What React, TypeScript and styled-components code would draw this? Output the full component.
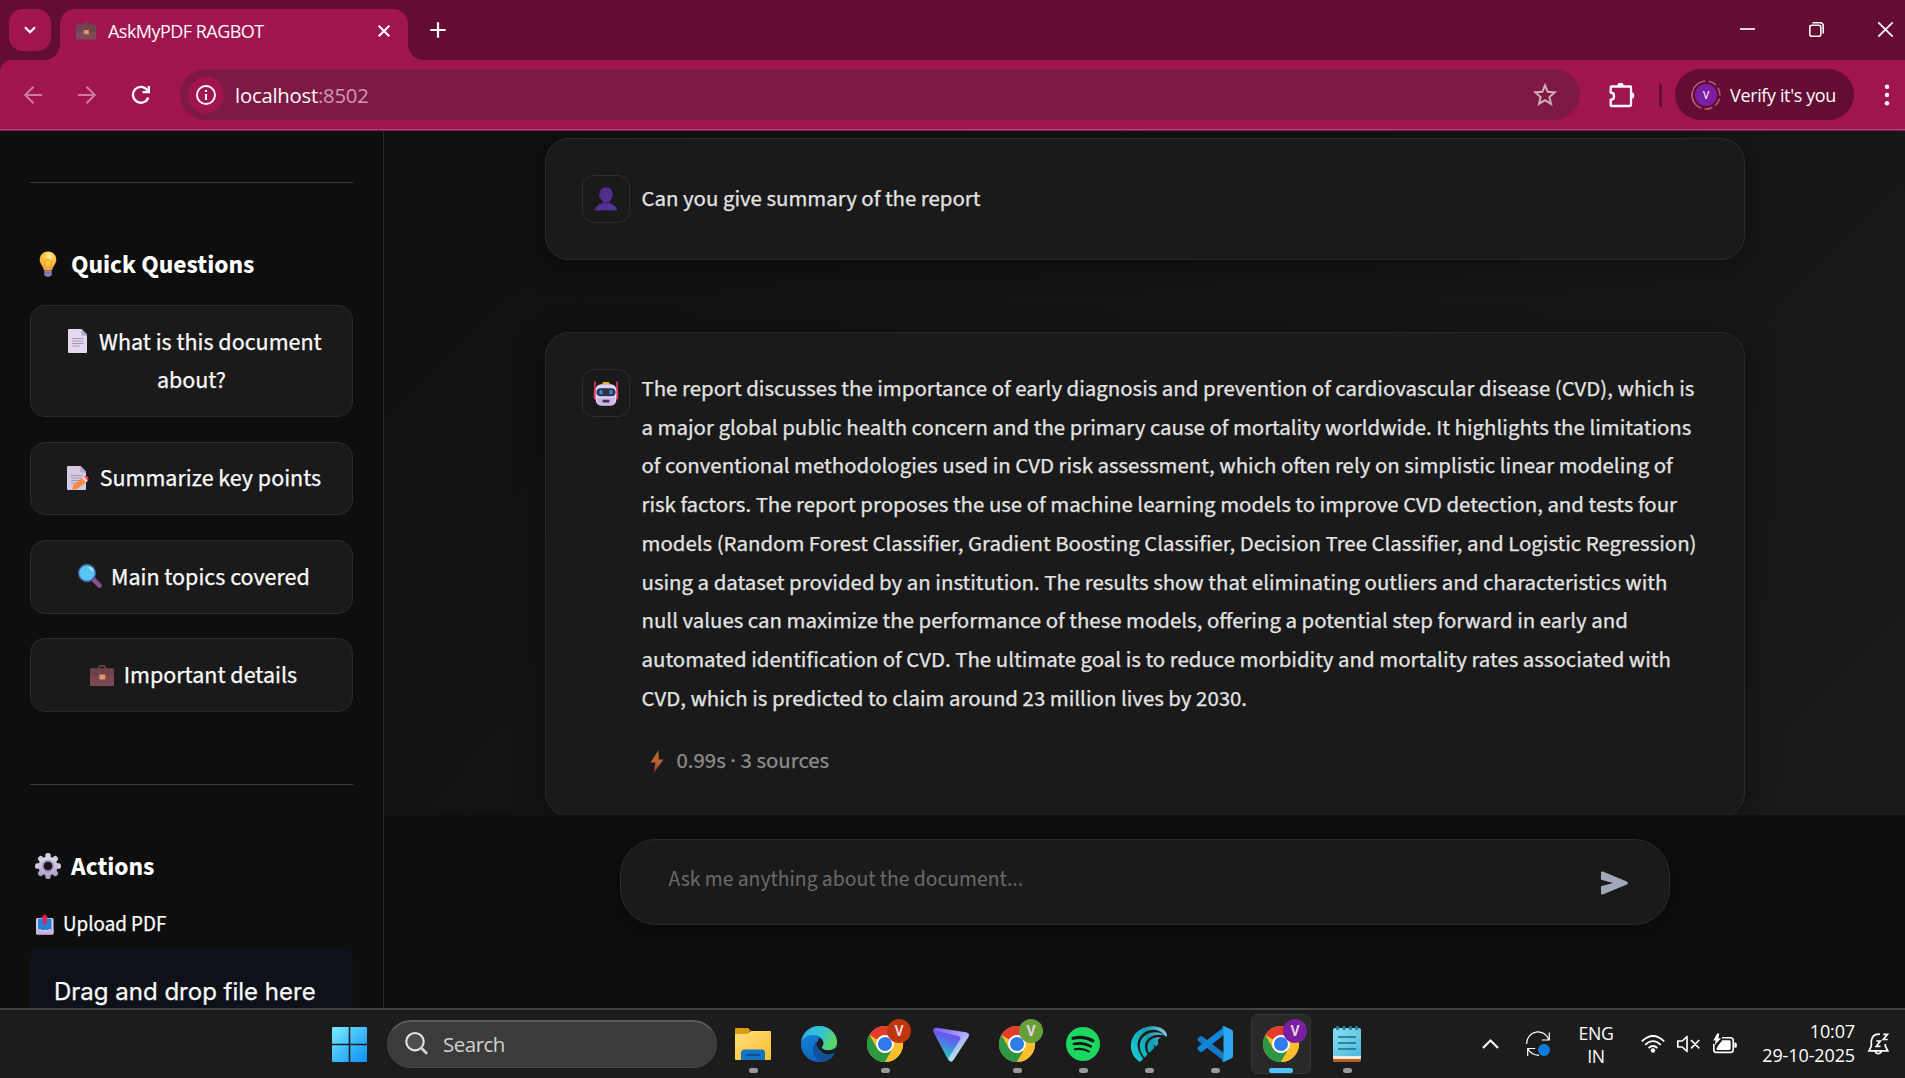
import React from "react";
import styled, { createGlobalStyle } from "styled-components";

const SOURCE = '"Source Sans 3", "Source Sans Pro", "Noto Sans CJK SC", sans-serif';
const SEGOE = '"Segoe UI", "Open Sans", "Noto Sans", sans-serif';

const GlobalStyle = createGlobalStyle`
  * { box-sizing: border-box; }
  html, body { margin: 0; padding: 0; background: #0e0e0e; overflow: hidden; }
  svg { display: block; flex: none; overflow: visible; }
  button { margin: 0; padding: 0; border: 0; background: none; color: inherit; font: inherit; }
`;

const Screen = styled.div`
  display: flex;
  flex-direction: column;
  width: 1905px;
  height: 1078px;
  overflow: hidden;
  font-family: ${SOURCE};
  color: #fafafa;
`;

/* ---------- Browser chrome ---------- */

const TabStrip = styled.div`
  display: flex;
  height: 60px;
  background: #640d33;
  padding: 9px 12px 0 9px;
  font-family: ${SEGOE};
`;

const TabSearch = styled.button`
  display: grid;
  place-items: center;
  width: 42px;
  height: 42px;
  border-radius: 14px;
  background: #a1154f;
`;

const Tab = styled.div`
  position: relative;
  display: flex;
  align-items: center;
  width: 348px;
  height: 51px;
  margin-left: 9px;
  padding: 0 18px 7px 16px;
  border-radius: 15px 15px 0 0;
  background: #a1154f;
  &::before,
  &::after {
    content: "";
    position: absolute;
    bottom: 0;
    width: 15px;
    height: 15px;
  }
  &::before {
    left: -15px;
    background: radial-gradient(circle at 0 0, transparent 14.5px, #a1154f 15px);
  }
  &::after {
    right: -15px;
    background: radial-gradient(circle at 100% 0, transparent 14.5px, #a1154f 15px);
  }
`;

const TabTitle = styled.span`
  flex: 1;
  margin-left: 12px;
  font-size: 18px;
  letter-spacing: -0.53px;
  line-height: 26px;
  white-space: nowrap;
`;

const NewTab = styled.button`
  align-self: flex-start;
  margin: 13px 0 0 22px;
`;

const WindowControls = styled.div`
  display: flex;
  gap: 54px;
  margin: 13px 0 0 auto;
  height: 15px;
`;

const Toolbar = styled.div`
  display: flex;
  align-items: center;
  height: 71px;
  padding: 0 15px 1px 24px;
  background: #a1154f;
  border-bottom: 1px solid #76204a;
  box-shadow: inset 0 -1px 0 #b04873;
  font-family: ${SEGOE};
`;

const ToolbarWrap = styled.div`
  background: #640d33;
  & > div { border-top-left-radius: 12px; }
`;

const NavButtons = styled.div`
  display: flex;
  gap: 36px;
  margin-right: 30px;
`;

const AddressBar = styled.div`
  display: flex;
  align-items: center;
  width: 1401px;
  height: 51px;
  padding: 0 23px 0 8px;
  border-radius: 26px;
  background: #7d1943;
`;

const SiteInfo = styled.span`
  display: grid;
  place-items: center;
  width: 36px;
  height: 36px;
  border-radius: 50%;
  background: #a1154f;
`;

const Url = styled.span`
  flex: 1;
  margin-left: 11px;
  font-size: 20.3px;
  letter-spacing: -0.22px;
  line-height: 28px;
  span { color: #d09ab2; }
`;

const ToolbarDivider = styled.i`
  width: 3px;
  height: 24px;
  margin: 0 13px 0 24px;
  border-radius: 2px;
  background: #640d33;
`;

const ProfilePill = styled.div`
  display: flex;
  align-items: center;
  width: 179px;
  height: 51px;
  padding-left: 16px;
  border-radius: 26px;
  background: #640d33;
  font-size: 18px;
  letter-spacing: -0.38px;
  white-space: nowrap;
`;

const ProfileLabel = styled.span`
  margin-left: 9px;
  line-height: 26px;
`;

/* ---------- App ---------- */

const Page = styled.div`
  display: flex;
  height: 877px;
  overflow: hidden;
  -webkit-text-stroke: 0.25px currentColor;
`;

const Sidebar = styled.aside`
  width: 384px;
  padding: 51px 30px 0;
  background: #0e0e0e;
  border-right: 1px solid #2a2a2a;
  overflow: hidden;
`;

const Rule = styled.hr`
  height: 1px;
  margin: 0;
  border: 0;
  background: #3c3c3c;
`;

const SectionTitle = styled.h3<{ $top: number; $bottom: number }>`
  display: flex;
  align-items: center;
  gap: 10px;
  height: 36px;
  margin: ${(p) => p.$top}px 0 ${(p) => p.$bottom}px 5px;
  font-size: 25.6px;
  font-weight: 700;
  line-height: 36px;
  color: #ffffff;
  -webkit-text-stroke: 0;
  span { padding-top: 2px; }
`;

const QuestionList = styled.div`
  display: flex;
  flex-direction: column;
  gap: 24.6px;
  margin-bottom: 71.8px;
`;

const QuestionButton = styled.button`
  width: 323px;
  padding: 17.6px 20px 16px;
  border: 1px solid #2a2a2a;
  border-radius: 15px;
  background: #1a1a1a;
  font-size: 24px;
  font-weight: 400;
  line-height: 38.2px;
  text-align: center;
`;

const Emoji = styled.span`
  display: inline-flex;
  align-items: flex-end;
  justify-content: center;
  width: 33px;
  height: 24px;
  vertical-align: -3.5px;
`;

const UploadLabel = styled.div`
  display: flex;
  align-items: center;
  gap: 9.5px;
  height: 30px;
  margin-left: 5.5px;
  font-size: 21px;
  line-height: 30px;
`;

const DropZone = styled.div`
  height: 120px;
  margin-top: 7.5px;
  padding: 25.7px 24px;
  border-radius: 12px;
  background: #0e1117;
  font-family: Inter, "Liberation Sans", sans-serif;
  font-size: 24px;
  line-height: 38px;
  white-space: nowrap;
`;

const Main = styled.main`
  display: flex;
  flex-direction: column;
  flex: 1;
  background: linear-gradient(135deg, #0f0f0f 0%, #1a1a1a 92%);
`;

const Conversation = styled.section`
  display: flex;
  flex-direction: column;
  align-items: flex-start;
  gap: 72px;
  height: 684px;
  padding: 7px 0 0 161px;
  overflow: hidden;
`;

const MessageCard = styled.article<{ $height: number }>`
  display: flex;
  flex: none;
  gap: 11.5px;
  width: 1200px;
  height: ${(p) => p.$height}px;
  padding: 36px;
  border: 1px solid #2a2a2a;
  border-radius: 24px;
  background: #1a1a1a;
  box-shadow: 0 6px 30px rgba(0, 0, 0, 0.4);
`;

const Avatar = styled.div`
  display: grid;
  place-items: center;
  flex: none;
  width: 48px;
  height: 48px;
  border: 1px solid #2d2d33;
  border-radius: 12px;
`;

const MessageBody = styled.div<{ $shift: number }>`
  margin-top: ${(p) => p.$shift}px;
  color: #e3e3e3;
  font-size: 22.8px;
  line-height: 38.76px;
  white-space: nowrap;
`;

const Meta = styled.div`
  display: flex;
  align-items: center;
  gap: 13px;
  margin-top: 23px;
  padding-left: 8px;
  color: #8c8c8c;
`;

const Composer = styled.footer`
  display: flex;
  align-items: flex-start;
  height: 193px;
  padding: 24px 0 0 236px;
  background: #0e0e0e;
`;

const PromptBox = styled.div`
  display: flex;
  align-items: center;
  justify-content: space-between;
  width: 1050px;
  height: 86px;
  padding: 1px 41px 0 47.5px;
  border: 1px solid #2a2a2a;
  border-radius: 36px;
  background: #1a1a1a;
  box-shadow: 0 6px 24px rgba(0, 0, 0, 0.4);
`;

const Placeholder = styled.span`
  padding-bottom: 5px;
  color: #6a6a6a;
  font-size: 21.6px;
  line-height: 36px;
  -webkit-text-stroke: 0;
`;

/* ---------- Taskbar ---------- */

const Taskbar = styled.div`
  display: flex;
  align-items: center;
  height: 70px;
  padding: 0 16px 0 332px;
  border-top: 2px solid #424242;
  background: #1c1c1c;
  font-family: ${SEGOE};
`;

const SearchPill = styled.div`
  display: flex;
  align-items: center;
  width: 330px;
  height: 48px;
  margin: 0 6px 0 20px;
  padding: 0 0 2px 17px;
  border: 1px solid #484848;
  border-top: 2px solid #5c5c5c;
  border-radius: 24px;
  background: #3b3b3b;
  color: #d2d2d2;
  font-size: 20.5px;
  letter-spacing: -0.5px;
`;

const SearchLabel = styled.span`
  margin-left: 15px;
  line-height: 28px;
`;

const Apps = styled.div`
  display: flex;
  gap: 6px;
`;

const AppTile = styled.div<{ $active?: boolean }>`
  position: relative;
  display: grid;
  place-items: center;
  width: 60px;
  height: 60px;
  border: 1px solid ${(p) => (p.$active ? "#363636" : "transparent")};
  border-radius: 7px;
  background: ${(p) => (p.$active ? "#292929" : "transparent")};
`;

const Indicator = styled.i<{ $active?: boolean }>`
  position: absolute;
  bottom: 0;
  left: calc(50% - ${(p) => (p.$active ? 12 : 4.5)}px);
  width: ${(p) => (p.$active ? 24 : 9)}px;
  height: 5px;
  border-radius: 3px;
  background: ${(p) => (p.$active ? "#4cc2ff" : "#9a9a9a")};
`;

const Badge = styled.b<{ $color: string }>`
  position: absolute;
  top: 4px;
  right: 3px;
  width: 24px;
  height: 24px;
  border-radius: 50%;
  background: ${(p) => p.$color};
  color: #ead9e2;
  font: 600 14px/24px Roboto, "Open Sans", sans-serif;
  text-align: center;
`;

const Tray = styled.div`
  display: flex;
  align-items: center;
  margin-left: auto;
  color: #ffffff;
  font-size: 17.5px;
`;

const Language = styled.div`
  width: 40px;
  margin: 2px 25px 0 26px;
  font-size: 17.7px;
  line-height: 23.5px;
  text-align: center;
  letter-spacing: -0.3px;
`;

const StatusIcons = styled.div`
  display: flex;
  align-items: center;
  gap: 12px;
`;

const Clock = styled.div`
  width: 118px;
  margin: -2px 13px 0 0;
  font-size: 18px;
  line-height: 24px;
  text-align: right;
  letter-spacing: -0.12px;
  white-space: nowrap;
`;

/* ---------- Pictograms ---------- */

const Briefcase = ({ w = 24, dim = false }: { w?: number; dim?: boolean }) => (
  <svg width={w} height={(w * 21) / 24} viewBox="0 0 24 21">
    <path d="M9 4V2.5Q9 .8 10.7.8h2.6Q15 .8 15 2.5V4" fill="none" stroke={dim ? "#6b4a50" : "#7a4650"} strokeWidth="1.4" />
    <rect y="3.4" width="24" height="17.6" rx="1" fill={dim ? "#7c4b55" : "#7b4852"} />
    <rect y="3.4" width="24" height="8.2" rx="1" fill={dim ? "#6c4650" : "#6e424c"} />
    <rect x="9.3" y="9.6" width="6" height="5" rx="1" fill="#e5936b" />
  </svg>
);

const Bulb = () => (
  <svg width="26" height="26" viewBox="0 0 26 26">
    <defs>
      <radialGradient id="bulb" cx=".6" cy=".25" r=".8">
        <stop offset="0" stopColor="#fff1a8" />
        <stop offset=".35" stopColor="#fcc94a" />
        <stop offset="1" stopColor="#f0a32e" />
      </radialGradient>
    </defs>
    <path d="M13 .5c5 0 8.3 3.5 8.3 8 0 4.200-3.200 5.900-4.300 11H9C7.900 14.400 4.700 12.700 4.700 8.500 4.700 4 8 .5 13 .5z" fill="url(#bulb)" />
    <path d="M10.500 19l-1.300-8c1.300-3 6.300-3 7.600 0l-1.300 8" fill="none" stroke="#e99a2b" strokeWidth=".9" />
    <path d="M9.300 19.500h7.400v3.700q0 2.300-3.700 2.300t-3.700-2.300z" fill="#a08bb5" />
    <path d="M9.300 21.300h7.400M9.600 23.300h6.800" stroke="#6f5b86" strokeWidth=".8" />
  </svg>
);

const Sheet = ({ pencil = false }: { pencil?: boolean }) => (
  <svg width={pencil ? 22 : 19} height="24" viewBox={pencil ? "0 0 22 24" : "0 0 19 24"}>
    <path d="M1 0h12.500L19 5.500V23q0 1-1 1H1q-1 0-1-1V1Q0 0 1 0z" fill={pencil ? "#d5cbe0" : "#e4daf0"} />
    <path d="M13.500 0L19 5.500V7l-5.500-.8z" fill="#b6a6c8" />
    <path d="M4 9.500h11.500M4 12h11.500M4 14.500h11.500M4 17h7.500" stroke="#a594b6" strokeWidth="1" />
    {pencil && (
      <g>
        <path d="M5 23.500l1.300-4.500L16.500 11l3.800 4.300L10 23z" fill="#f98a45" />
        <path d="M15 12.200l2-1.700 4 4.300-2 1.800z" fill="#efd5d8" />
        <path d="M17 10.500q2-1.500 3.800.5 1.500 2 .2 3.800z" fill="#f2405f" />
      </g>
    )}
  </svg>
);

const Magnifier = () => (
  <svg width="24" height="24" viewBox="0 0 24 24">
    <path d="M15 15l6.500 6.500" stroke="#8d4d97" strokeWidth="4.600" strokeLinecap="round" />
    <circle cx="9" cy="9" r="8.500" fill="#58c4f0" stroke="#44589e" strokeWidth="1.400" />
    <path d="M11.500 3.500q2.500 1 3.200 3.200" stroke="#bdf0ff" strokeWidth="1.500" fill="none" strokeLinecap="round" />
  </svg>
);

const Gear = () => (
  <svg width="26" height="26" viewBox="-13 -13 26 26">
    <defs>
      <linearGradient id="gear" x1="0" y1="0" x2="0" y2="1">
        <stop offset="0" stopColor="#e0d9ea" />
        <stop offset="1" stopColor="#b3a1cb" />
      </linearGradient>
    </defs>
    <g fill="url(#gear)">
      {[0, 45, 90, 135, 180, 225, 270, 315].map((a) => (
        <rect key={a} x="-2.700" y="-13" width="5.400" height="7" rx="2.200" transform={`rotate(${a})`} fill={a > 90 && a < 270 ? "#b3a1cb" : "#d3cade"} />
      ))}
      <circle r="9.600" />
    </g>
    <circle r="5.700" fill="#93829f" />
    <circle r="4.100" fill="#17141a" />
  </svg>
);

const Outbox = () => (
  <svg width="18" height="21" viewBox="0 0 18 21">
    <rect y="4" width="17.500" height="16.500" rx="1.500" fill="#dccdee" />
    <path d="M2 4.800h13.500V16H2z" fill="#2380d8" />
    <path d="M0 15h5l1.500 2.300h4.600L12.500 15h5v4.300q0 1.200-1.200 1.200H1.200Q0 20.500 0 19.300z" fill="#cbb3e0" />
    <path d="M8.700 0l4.200 4.500h-2.300v5.800H6.900V4.500H4.600z" fill="#d6244f" />
  </svg>
);

const Person = () => (
  <svg width="24" height="24" viewBox="0 0 24 24">
    <defs>
      <linearGradient id="person" x1="0" y1="0" x2="1" y2="1">
        <stop offset="0" stopColor="#4c2c85" />
        <stop offset="1" stopColor="#56339a" />
      </linearGradient>
    </defs>
    <path d="M5.800 6Q5.800.5 12 .5T18.200 6v3.500q-.7 3.500-3 4.800v2q7.300 1.700 8 7.200H.8q.7-5.500 8-7.200v-2q-2.300-1.300-3-4.800z" fill="url(#person)" />
    <path d="M5.200 7q-.6 1.500.3 3.200l1 .3V6.500zM18.800 7q.6 1.500-.3 3.200l-1 .3V6.500z" fill="#4c2c85" />
    <path d="M8.800 14.300q3.200 1.700 6.400 0v1.500q-3 2-6.400 0z" fill="#3f2571" />
  </svg>
);

const Robot = () => (
  <svg width="26" height="25" viewBox="0 0 26 25">
    <path d="M2 1v8M24 1v8" stroke="#d73b62" strokeWidth="1.700" strokeLinecap="round" />
    <rect x=".8" y="8.500" width="3.500" height="10" rx="1.500" fill="#e63c67" />
    <rect x="21.700" y="8.500" width="3.500" height="10" rx="1.500" fill="#e63c67" />
    <path d="M9 3.500Q9 1 11 1h4q2 0 2 2.500z" fill="#f2ab2b" />
    <rect x="2.700" y="3.200" width="20.600" height="21.300" rx="5.500" fill="#e2d5f1" />
    <path d="M4 17h18v2.500q-.5 5-5.500 5h-7q-5 0-5.500-5z" fill="#cdb7e6" />
    <rect x="3.500" y="7.200" width="19" height="8" rx="4" fill="#33304e" />
    <ellipse cx="8" cy="11.200" rx="1.700" ry="2.400" fill="#2b8fe0" />
    <ellipse cx="18" cy="11.200" rx="1.700" ry="2.400" fill="#2b8fe0" />
    <rect x="9.500" y="18.800" width="7" height="2.600" rx="1" fill="#3c3152" />
  </svg>
);

const Bolt = () => (
  <svg width="14" height="23" viewBox="0 0 14 23">
    <defs>
      <linearGradient id="bolt" x1="0" y1="0" x2="0" y2="1">
        <stop offset="0" stopColor="#a5702e" />
        <stop offset=".5" stopColor="#b86433" />
        <stop offset="1" stopColor="#95323c" />
      </linearGradient>
    </defs>
    <path d="M8.600 0L.5 12.500h4.800L4 22.800 13.500 9.500H8.700z" fill="url(#bolt)" />
  </svg>
);

const SendIcon = () => (
  <svg width="27" height="24" viewBox="0 0 27 24">
    <path d="M0 1.800Q0 0 1.900.6l23.900 9.800q2.200 1.600 0 3.200L1.900 23.400Q0 24 0 22.200V16q0-.8.8-1L12 12 .8 9Q0 8.800 0 8z" fill="#a3a8b8" />
  </svg>
);

/* ---------- Taskbar app logos ---------- */

const WindowsLogo = () => (
  <svg width="35" height="35" viewBox="0 0 35 35">
    <defs>
      <linearGradient id="win" gradientUnits="userSpaceOnUse" x1="0" y1="0" x2="35" y2="35">
        <stop offset="0" stopColor="#7bedff" />
        <stop offset=".5" stopColor="#3fbcfb" />
        <stop offset="1" stopColor="#0a90f5" />
      </linearGradient>
    </defs>
    <path d="M1 0h15.700v16.700H0V1zM18.300 0H34q1 0 1 1v15.700H18.300zM0 18.300h16.700V35H1q-1 0-1-1zM18.300 18.300H35V34q0 1-1 1H18.300z" fill="url(#win)" />
  </svg>
);

const Explorer = () => (
  <svg width="36" height="34" viewBox="0 0 36 34">
    <defs>
      <linearGradient id="fold" x1="0" y1="0" x2="1" y2="1">
        <stop offset="0" stopColor="#ffe07c" />
        <stop offset="1" stopColor="#fbbe31" />
      </linearGradient>
    </defs>
    <path d="M0 2q0-1 1-1h12l3 3h-1l-3 4H0z" fill="#dc9c12" />
    <path d="M0 7h12l4-3h19q1 0 1 1v27q0 1-1 1H1q-1 0-1-1z" fill="url(#fold)" />
    <path d="M6 33v-7q0-3.500 3.500-3.500h17Q30 22.500 30 26v7z" fill="#1474c4" />
    <path d="M11 28h14" stroke="#0a4882" strokeWidth="1.600" />
  </svg>
);

const Edge = () => (
  <svg width="36" height="36" viewBox="0 0 36 36">
    <defs>
      <linearGradient id="edgeTop" x1="0" y1=".3" x2="1" y2=".7">
        <stop offset="0" stopColor="#2fb0e6" />
        <stop offset=".5" stopColor="#35c5d0" />
        <stop offset="1" stopColor="#63d84f" />
      </linearGradient>
      <linearGradient id="edgeMid" x1="0" y1="0" x2=".4" y2="1">
        <stop offset="0" stopColor="#148ad9" />
        <stop offset="1" stopColor="#1064c0" />
      </linearGradient>
    </defs>
    <circle cx="18" cy="18" r="18" fill="url(#edgeMid)" />
    <path d="M18 12q5 1 4 7-2 3 2 5.200 6 1.500 12.500-3V30l-3-3q-6 3-12 0-5-4-6-9z" fill="#1c1c1c" />
    <path d="M13.800 17.500C9 25 14 35.500 22.500 35.500c5 0 10-4.500 11.300-8.500-7 3.500-14 2.300-16.500-3-1.800-3.800-1-8 1.300-10-2 .2-3.800 1.700-4.800 3.500z" fill="#114f98" />
    <path d="M0 17C1 7 9 0 18 0c10.500 0 18 7.500 18 15.800 0 5.500-4 8.200-8.500 8.200-4.200 0-6.700-1.300-6.700-2.700 0-.8 1.700-1.600 1.700-4.800C22.500 12 18 9 12 9 6 9 1 12.500 0 17z" fill="url(#edgeTop)" />
    <path d="M15.500 17q2-3.500 6.500-2 1.200 3.800-1.500 6.200 1 3.500 7.500 3.300-5 2.300-9-.5-3.800-3-3.500-7z" fill="#1c1c1c" />
  </svg>
);

const Chrome = () => (
  <svg width="36" height="36" viewBox="-18 -18 36 36">
    <circle r="18" fill="#fbbf2c" />
    <path d="M-15.590-9A18 18 0 0 1 15.590-9H0A9 9 0 0 0-7.790-4.500z" fill="#e33b2e" />
    <path d="M-15.590-9A18 18 0 0 0 0 18L7.790 4.500A9 9 0 0 1-7.790 4.500z" fill="#2c9745" />
    <path d="M15.590-9A18 18 0 0 1 0 18L7.790 4.500A9 9 0 0 0 0-9z" fill="#fbbf2c" />
    <circle r="9" fill="#fff" />
    <circle r="7" fill="#2f7bea" />
  </svg>
);

const ProtonVpn = () => (
  <svg width="36" height="35" viewBox="0 0 36 35">
    <defs>
      <linearGradient id="pv1" x1="0" y1="0" x2=".8" y2="1">
        <stop offset="0" stopColor="#7a52f4" />
        <stop offset=".45" stopColor="#a99bf8" />
        <stop offset="1" stopColor="#b5ffec" />
      </linearGradient>
      <linearGradient id="pv2" x1=".8" y1="0" x2=".5" y2="1">
        <stop offset="0" stopColor="#7340f2" />
        <stop offset=".5" stopColor="#4f7ae3" />
        <stop offset="1" stopColor="#21d4bd" />
      </linearGradient>
    </defs>
    <path d="M.3 4.500Q0 .3 4 .8l29 4.500q4.500 1 2.300 5L20.500 33q-2.500 3.300-5 0z" fill="url(#pv1)" />
    <path d="M.5 4.500Q1 2.500 5 4.200L25.500 9q3 1.200 1.300 4L16.500 29.500l-1.300 3z" fill="url(#pv2)" />
  </svg>
);

const Spotify = () => (
  <svg width="34" height="34" viewBox="0 0 34 34">
    <circle cx="17" cy="17" r="17" fill="#1ed760" />
    <g fill="none" stroke="#161616" strokeLinecap="round">
      <path d="M7 11.300q10.500-2.800 20 2.500" strokeWidth="3.200" />
      <path d="M8 17q9-2.200 16.800 2.300" strokeWidth="2.700" />
      <path d="M8.800 22.300q7.500-1.700 14 2.100" strokeWidth="2.200" />
    </g>
  </svg>
);

const Wave = () => (
  <svg width="36" height="36" viewBox="0 0 36 36">
    <defs>
      <linearGradient id="wave" gradientUnits="userSpaceOnUse" x1="0" y1="20" x2="34" y2="3">
        <stop offset="0" stopColor="#16c7cd" />
        <stop offset=".55" stopColor="#159bb0" />
        <stop offset="1" stopColor="#86c8ea" />
      </linearGradient>
    </defs>
    <g fill="url(#wave)">
      <path d="M9 36C-3.500 28-2.500 11 8.500 4 18-2 31-.5 35 6.500q1.500 1.800.8 3.700-1.300.8-2.500-1C28 3 20 2.300 13.500 6.500 5 12 4 22.500 12.300 32.700z" />
      <path d="M13.500 31.500C6.500 23 7.500 12.800 15.500 8.500c6-3.200 13.500-3 17.300.8-5-1.300-10.800-.6-15 3-5 4.500-4.600 10.200-1.300 16.300z" />
      <path d="M18 27c-3.300-7-1-12.500 4-14.700q4.500-1.600 8.200-.8-5 1.500-2.700 6.300L24.700 20.700q-2-1.300-2.300-2.700.2 2 1 3.800z" />
    </g>
  </svg>
);

const VsCode = () => (
  <svg width="36" height="36" viewBox="0 0 36 36">
    <path d="M.8 12.500L3 10.300q1-.8 2.200 0L28 28v7.800L1 15q-1.200-1.300-.2-2.500z" fill="#1379c4" />
    <path d="M.8 23.500L3 25.700q1 .8 2.200 0L28 8V.2L1 21q-1.200 1.300-.2 2.500z" fill="#0f86d8" />
    <path d="M26.500 0l8.300 3.800q1.200.6 1.200 2v24.400q0 1.400-1.200 2L26.500 36l-1.700-1.300q1.700.3 1.700-1.700V3q0-2-1.700-1.700z" fill="#2ca5f2" />
  </svg>
);

const Notepad = () => (
  <svg width="28" height="36" viewBox="0 0 28 36">
    <defs>
      <linearGradient id="note" x1="0" y1="0" x2="1" y2="1">
        <stop offset="0" stopColor="#8adff0" />
        <stop offset="1" stopColor="#4fb9dc" />
      </linearGradient>
    </defs>
    <path d="M0 30h28v4.500q0 1.500-1.500 1.500h-25Q0 36 0 34.500z" fill="#b4611c" />
    <path d="M0 27h28v4.500q0 1.500-1.500 1.500h-25Q0 33 0 31.500z" fill="#f1e9e4" />
    <path d="M0 4q0-2 2-2h24q2 0 2 2v26H0z" fill="url(#note)" />
    <path d="M5 11h18M5 17h18M5 23h18" stroke="#12718f" strokeWidth="1.700" />
    <path d="M4.500 0v4M11 0v4M17.500 0v4M23.500 0v4" stroke="#1c7d9c" strokeWidth="2.600" />
  </svg>
);

type AppEntry = { id: string; icon: React.ReactNode; running?: boolean; active?: boolean; badge?: string };

const APPS: AppEntry[] = [
  { id: "explorer", icon: <Explorer />, running: true },
  { id: "edge", icon: <Edge /> },
  { id: "chrome-red", icon: <Chrome />, running: true, badge: "#bf360c" },
  { id: "vpn", icon: <ProtonVpn /> },
  { id: "chrome-green", icon: <Chrome />, running: true, badge: "#689f38" },
  { id: "spotify", icon: <Spotify />, running: true },
  { id: "wave", icon: <Wave />, running: true },
  { id: "vscode", icon: <VsCode />, running: true },
  { id: "chrome-purple", icon: <Chrome />, running: true, active: true, badge: "#7b1fa2" },
  { id: "notepad", icon: <Notepad />, running: true },
];

const ANSWER = [
  "The report discusses the importance of early diagnosis and prevention of cardiovascular disease (CVD), which is",
  "a major global public health concern and the primary cause of mortality worldwide. It highlights the limitations",
  "of conventional methodologies used in CVD risk assessment, which often rely on simplistic linear modeling of",
  "risk factors. The report proposes the use of machine learning models to improve CVD detection, and tests four",
  "models (Random Forest Classifier, Gradient Boosting Classifier, Decision Tree Classifier, and Logistic Regression)",
  "using a dataset provided by an institution. The results show that eliminating outliers and characteristics with",
  "null values can maximize the performance of these models, offering a potential step forward in early and",
  "automated identification of CVD. The ultimate goal is to reduce morbidity and mortality rates associated with",
  "CVD, which is predicted to claim around 23 million lives by 2030.",
];

const line = { fill: "none", stroke: "currentColor" } as const;

function BrowserChrome() {
  return (
    <>
      <TabStrip>
        <TabSearch aria-label="Search tabs">
          <svg width="12" height="8" viewBox="0 0 12 8"><path d="M1 1.200l5 5 5-5" {...line} strokeWidth="2.300" /></svg>
        </TabSearch>
        <Tab>
          <Briefcase w={20} dim />
          <TabTitle>AskMyPDF RAGBOT</TabTitle>
          <svg width="12" height="12" viewBox="0 0 12 12"><path d="M.7.7l10.600 10.600M11.300.7L.7 11.300" {...line} strokeWidth="2.200" /></svg>
        </Tab>
        <NewTab aria-label="New tab">
          <svg width="16" height="16" viewBox="0 0 16 16"><path d="M8 .3v15.400M.3 8h15.400" {...line} strokeWidth="2.200" /></svg>
        </NewTab>
        <WindowControls>
          <svg width="15" height="15" viewBox="0 0 15 15"><path d="M0 7h15" {...line} strokeWidth="1.700" /></svg>
          <svg width="15" height="15" viewBox="0 0 15 15">
            <rect x=".8" y="3.300" width="11" height="11" rx="2" {...line} strokeWidth="1.600" />
            <path d="M3.500.8H11q3.200 0 3.200 3.200v7.500" {...line} strokeWidth="1.600" />
          </svg>
          <svg width="15" height="15" viewBox="0 0 15 15"><path d="M.3.3l14.400 14.400M14.700.3L.3 14.700" {...line} strokeWidth="1.700" /></svg>
        </WindowControls>
      </TabStrip>
      <ToolbarWrap>
        <Toolbar>
          <NavButtons>
            <svg width="18" height="18" viewBox="0 0 18 18"><path d="M18 9H1.500M9.500.7L1.200 9l8.300 8.300" {...line} stroke="#cf7a9e" strokeWidth="2" /></svg>
            <svg width="18" height="18" viewBox="0 0 18 18"><path d="M0 9h16.500M8.500.7L16.800 9l-8.300 8.300" {...line} stroke="#cf7a9e" strokeWidth="2" /></svg>
            <svg width="18" height="18" viewBox="0 0 18 18">
              <path d="M16.300 11.500A7.900 7.900 0 1 1 15.500 4.500" {...line} strokeWidth="2.300" />
              <path d="M18 0v7.300h-7.500V5h5.200V0z" fill="currentColor" />
            </svg>
          </NavButtons>
          <AddressBar>
            <SiteInfo>
              <svg width="20" height="20" viewBox="0 0 20 20">
                <circle cx="10" cy="10" r="9" {...line} strokeWidth="1.900" />
                <path d="M10 9v6M10 5v2.100" {...line} strokeWidth="2.100" />
              </svg>
            </SiteInfo>
            <Url>localhost<span>:8502</span></Url>
            <svg width="24" height="23" viewBox="0 0 24 23">
              <path d="M12 2.300l2.700 6.500 7 .6-5.300 4.600 1.600 6.800-6-3.600-6 3.600L7.600 14 2.300 9.400l7-.6z" {...line} stroke="#d0afbd" strokeWidth="2" />
            </svg>
          </AddressBar>
          <svg width="26" height="26" viewBox="0 0 26 26" style={{ marginLeft: 29 }}>
            <path d="M2.500 4.500h19q.5 0 .5.500v18q0 1-1 1H2.500q-.8 0-.8-.8v-5.400c4.500-.3 4.500-7 0-7.300V5.300q0-.8.8-.8z" {...line} strokeWidth="2.300" />
            <path d="M8.300 4a3.200 3.200 0 0 1 6.400 0zM22 10.200a3.200 3.200 0 0 1 0 6.500z" fill="currentColor" />
          </svg>
          <ToolbarDivider />
          <ProfilePill>
            <svg width="30" height="30" viewBox="0 0 30 30">
              <circle cx="15" cy="15" r="11" fill="#7b1fa2" />
              <circle cx="15" cy="15" r="14" fill="none" stroke="#b7607f" strokeWidth="1.500" pathLength="88" strokeDasharray="8 3.500 8 3.500 8 3.500 8 3.500 38.500 3.500" transform="rotate(-78 15 15)" />
              <text x="15" y="18.600" textAnchor="middle" fontSize="10.500" fontFamily="Roboto" fill="#fff">V</text>
            </svg>
            <ProfileLabel>Verify it's you</ProfileLabel>
          </ProfilePill>
          <svg width="6" height="22" viewBox="0 0 6 22" style={{ marginLeft: 30 }}>
            <g fill="currentColor"><circle cx="3" cy="2.700" r="2.200" /><circle cx="3" cy="11" r="2.200" /><circle cx="3" cy="19.300" r="2.200" /></g>
          </svg>
        </Toolbar>
      </ToolbarWrap>
    </>
  );
}

function AppSidebar() {
  return (
    <Sidebar>
      <Rule />
      <SectionTitle $top={63} $bottom={23}><Bulb /><span>Quick Questions</span></SectionTitle>
      <QuestionList>
        <QuestionButton><Emoji><Sheet /></Emoji> What is this document about?</QuestionButton>
        <QuestionButton><Emoji><Sheet pencil /></Emoji> Summarize key points</QuestionButton>
        <QuestionButton><Emoji><Magnifier /></Emoji> Main topics covered</QuestionButton>
        <QuestionButton><Emoji><Briefcase /></Emoji> Important details</QuestionButton>
      </QuestionList>
      <Rule />
      <SectionTitle $top={63} $bottom={25.500}><Gear /><span>Actions</span></SectionTitle>
      <UploadLabel><Outbox />Upload PDF</UploadLabel>
      <DropZone>Drag and drop file here</DropZone>
    </Sidebar>
  );
}

function Chat() {
  return (
    <Main>
      <Conversation>
        <MessageCard $height={122}>
          <Avatar><Person /></Avatar>
          <MessageBody $shift={5}>Can you give summary of the report</MessageBody>
        </MessageCard>
        <MessageCard $height={485}>
          <Avatar><Robot /></Avatar>
          <MessageBody $shift={0.800}>
            {ANSWER.map((text) => <div key={text}>{text}</div>)}
            <Meta><Bolt /><span>0.99s · 3 sources</span></Meta>
          </MessageBody>
        </MessageCard>
      </Conversation>
      <Composer>
        <PromptBox>
          <Placeholder>Ask me anything about the document...</Placeholder>
          <SendIcon />
        </PromptBox>
      </Composer>
    </Main>
  );
}

function WindowsTaskbar() {
  return (
    <Taskbar>
      <WindowsLogo />
      <SearchPill>
        <svg width="23" height="23" viewBox="0 0 23 23">
          <circle cx="10" cy="9.700" r="8.700" fill="#4e4e4e" stroke="#e6e6e6" strokeWidth="2.100" />
          <path d="M16.300 16l5 5" stroke="#d2d2d2" strokeWidth="2.800" strokeLinecap="round" />
        </svg>
        <SearchLabel>Search</SearchLabel>
      </SearchPill>
      <Apps>
        {APPS.map((app) => (
          <AppTile key={app.id} $active={app.active}>
            {app.icon}
            {app.badge && <Badge $color={app.badge}>V</Badge>}
            {app.running && <Indicator $active={app.active} />}
          </AppTile>
        ))}
      </Apps>
      <Tray>
        <svg width="17" height="10" viewBox="0 0 17 10"><path d="M1 9l7.500-7.500L16 9" {...line} strokeWidth="2" /></svg>
        <svg width="24" height="24" viewBox="0 0 24 24" style={{ marginLeft: 27 }}>
          <path d="M.7 12A11.300 11.300 0 0 1 22.800 8M23.300.5V8h-7.500M13 23.300Q5 23 2 17M1.700 24v-7.500h7.500" {...line} strokeWidth="1.200" />
          <circle cx="18" cy="18" r="6" fill="#0f7bdc" />
        </svg>
        <Language>ENG<br />IN</Language>
        <StatusIcons>
          <svg width="24" height="18" viewBox="0 0 24 18">
            <path d="M.8 6.300Q12-4.300 23.200 6.300M4.200 9.800Q12 2.500 19.800 9.800M7.600 13Q12 9 16.400 13" {...line} strokeWidth="1.800" />
            <circle cx="12" cy="15.500" r="2.200" fill="currentColor" />
          </svg>
          <svg width="24" height="18" viewBox="0 0 24 18">
            <path d="M.8 6h4.500L10 1.500v15L5.300 12H.8zM14 5l8.300 8.300M22.300 5L14 13.300" {...line} strokeWidth="1.700" strokeLinejoin="round" />
          </svg>
          <svg width="24" height="20" viewBox="0 0 24 20">
            <path d="M9 3.800h8.500q2.700 0 2.700 2.700v9.200q0 2.700-2.700 2.700H3.500Q.8 18.400.8 15.700V10" {...line} strokeWidth="1.600" />
            <path d="M9.300 6.300h7q1.400 0 1.400 1.400v6.800q0 1.400-1.400 1.400H4.200q-1-.1-.7-1.200l1.700-3.200zM21.300 8.500h.9q1.600 0 1.600 1.500v2.200q0 1.500-1.600 1.500h-.9zM4.200-.5L.3 6.500h2.400L1.500 11.500 8 4.200H5.300L6.300-.5z" fill="currentColor" />
          </svg>
        </StatusIcons>
        <Clock>10:07<br />29-10-2025</Clock>
        <svg width="21" height="22" viewBox="0 0 21 22">
          <path d="M12 1.300Q4.500.5 3.300 8v5L1 17.800h18.800L17.300 13v-2M7 18.500q3 4.500 6.500 0" {...line} strokeWidth="1.700" />
          <path d="M8.300 8h4L8.300 13.300h4.200M15.300 1.300h4.200L15.300 6.500h4.500" {...line} strokeWidth="1.700" />
        </svg>
      </Tray>
    </Taskbar>
  );
}

export default function App() {
  return (
    <Screen>
      <GlobalStyle />
      <BrowserChrome />
      <Page>
        <AppSidebar />
        <Chat />
      </Page>
      <WindowsTaskbar />
    </Screen>
  );
}
